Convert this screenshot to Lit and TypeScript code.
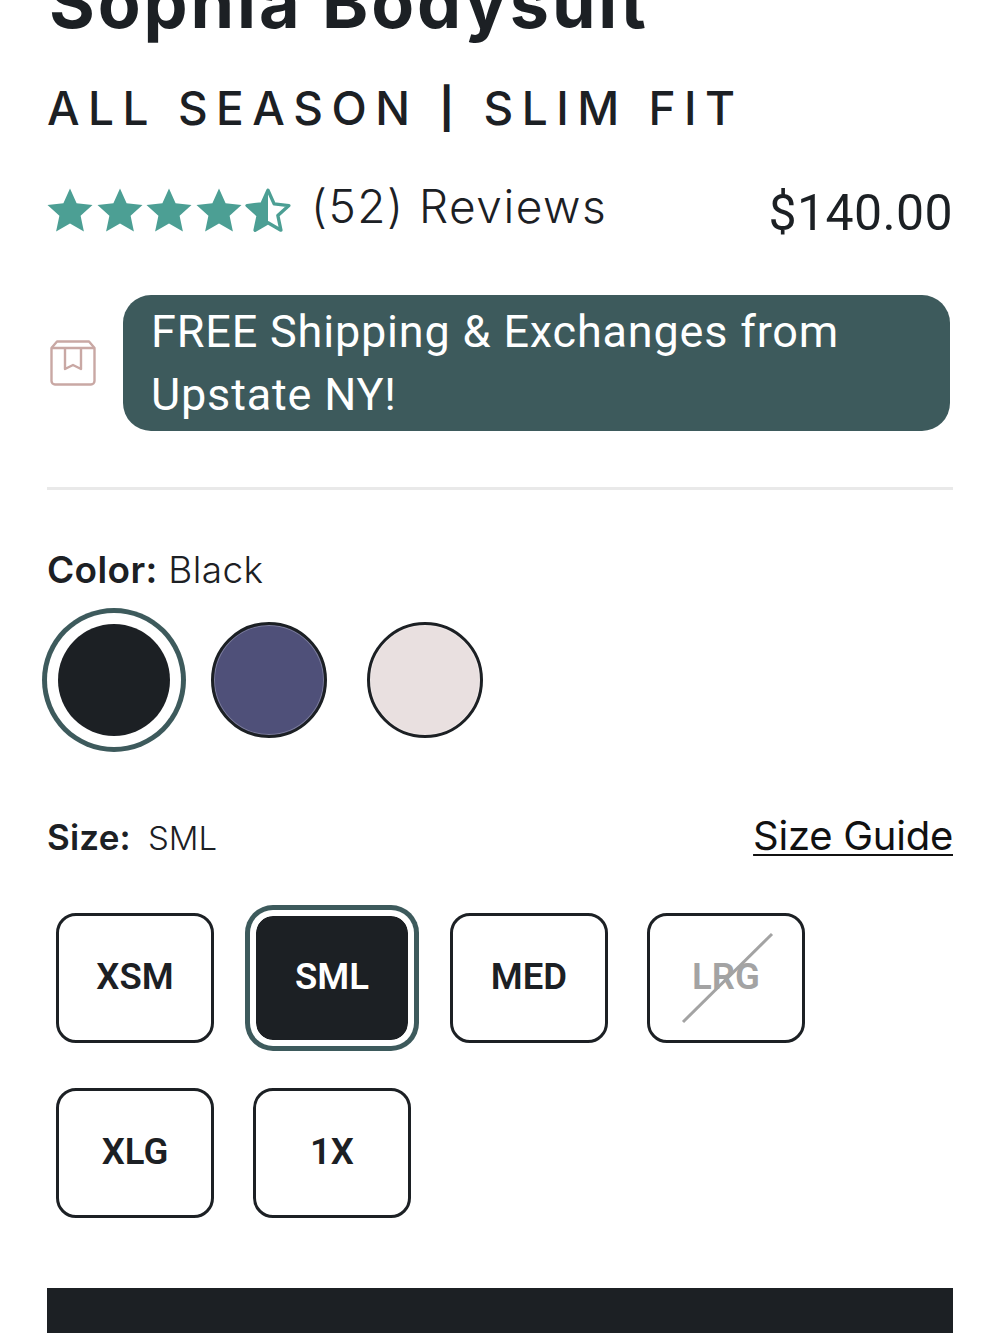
import { css, html, LitElement, svg } from "lit";
import { customElement } from "lit/decorators.js";

const STAR = "M23 1.5l6.6 14.7 15.9 1.8-11.9 10.7 3.3 15.8L23 36.5 9.1 44.5l3.3-15.8L.5 18l15.9-1.8z";

const colors = [
  { name: "Black", hex: "#1c2024", selected: true },
  { name: "Navy", hex: "#4f5079", selected: false },
  { name: "Blush", hex: "#e9e0e0", selected: false },
];

const sizes = [
  { label: "XSM" },
  { label: "SML", selected: true },
  { label: "MED" },
  { label: "LRG", soldOut: true },
  { label: "XLG" },
  { label: "1X" },
];

@customElement("app-root")
export class AppRoot extends LitElement {
  renderStar(half = false) {
    return html`
      <svg class="star" viewBox="0 0 46 46">
        ${half
          ? svg`
              <path d=${STAR} fill="none" stroke="#4c9f94" stroke-width="3.6" stroke-linejoin="round" transform="translate(1.6 1.8) scale(.93)"></path>
              <path d="M23 1.5v35L9.1 44.5l3.3-15.8L.5 18l15.9-1.8z" fill="#4c9f94"></path>
            `
          : svg`<path d=${STAR} fill="#4c9f94"></path>`}
      </svg>
    `;
  }

  render() {
    return html`
      <div class="page">
        <h1 class="title">Sophia Bodysuit</h1>
        <div class="subtitle">ALL SEASON <span class="pipe">|</span> SLIM FIT</div>

        <div class="rating-row">
          <div class="stars">
            ${[0, 1, 2, 3].map(() => this.renderStar())}${this.renderStar(true)}
          </div>
          <span class="reviews">(52) Reviews</span>
          <span class="price">$140.00</span>
        </div>

        <div class="shipping">
          <svg class="box" viewBox="0 0 46 46" fill="none" stroke="#c9a8a4" stroke-width="2.4" stroke-linejoin="round">
            <path d="M7 1.5h32l5.5 6.5v33a3.5 3.5 0 0 1-3.5 3.5H5a3.5 3.5 0 0 1-3.5-3.5V8z"></path>
            <path d="M1.5 8h43M15 8v21l8-4 8 4V8"></path>
          </svg>
          <div class="pill">FREE Shipping &amp; Exchanges from Upstate NY!</div>
        </div>

        <hr class="divider" />

        <div class="color-label"><b>Color:</b> Black</div>
        <div class="swatches">
          ${colors.map(
            (c) => html`
              <div class="swatch-slot">
                <div
                  class=${c.selected ? "swatch selected" : "swatch"}
                  style="background-color: ${c.hex}"
                ></div>
              </div>
            `
          )}
        </div>

        <div class="size-head">
          <div class="size-label"><b>Size:</b><span>SML</span></div>
          <a class="guide">Size Guide</a>
        </div>

        <div class="sizes">
          ${sizes.map(
            (s) => html`
              <div class="size ${s.selected ? "selected" : ""} ${s.soldOut ? "sold-out" : ""}">
                ${s.label}
                ${s.soldOut
                  ? html`<svg class="slash" viewBox="0 0 158 130">
                      <line x1="36" y1="109" x2="125" y2="21" stroke="#a3a3a3" stroke-width="3"></line>
                    </svg>`
                  : ""}
              </div>
            `
          )}
        </div>

        <div class="cta"></div>
      </div>
    `;
  }

  static styles = css`
    :host {
      display: block;
      height: 1333px;
      overflow: hidden;
      background: #fff;
      color: #1c2024;
      font-family: Inter, "Liberation Sans", sans-serif;
    }
    .page {
      display: flex;
      flex-direction: column;
      padding: 0 47px;
    }
    .title {
      margin: -33px 0 0 2px;
      font-size: 70px;
      line-height: 72px;
      font-weight: 700;
      letter-spacing: 2.9px;
      white-space: nowrap;
    }
    .subtitle {
      margin-top: 41px;
      font-size: 46px;
      line-height: 56px;
      font-weight: 500;
      letter-spacing: 8.5px;
      white-space: nowrap;
    }
    .pipe {
      font-size: 40px;
      font-weight: 700;
      vertical-align: 2px;
    }
    .rating-row {
      display: flex;
      align-items: center;
      margin-top: 37px;
      height: 71px;
    }
    .stars {
      display: flex;
      gap: 3.5px;
    }
    .star {
      width: 46px;
      height: 46px;
    }
    .reviews {
      margin-left: 20px;
      font-size: 46px;
      font-weight: 300;
      letter-spacing: 1.5px;
      margin-top: -8px;
    }
    .price {
      margin-left: auto;
      font-family: Roboto, sans-serif;
      font-size: 50px;
      letter-spacing: 0.4px;
      margin-top: 6px;
    }
    .shipping {
      display: flex;
      align-items: center;
      gap: 27px;
      margin-top: 50px;
      padding: 0 3px;
    }
    .box {
      flex: none;
      width: 46px;
      height: 46px;
    }
    .pill {
      flex: 1;
      box-sizing: border-box;
      height: 136px;
      padding: 5px 28px;
      border-radius: 28px;
      background: #3d5a5c;
      color: #fff;
      font-family: Roboto, sans-serif;
      font-size: 45px;
      line-height: 63px;
      letter-spacing: 0.82px;
    }
    .divider {
      align-self: stretch;
      height: 3px;
      margin: 56px 0 0;
      border: 0;
      background: #e9e9e9;
    }
    .color-label {
      margin-top: 57px;
      font-size: 37px;
      line-height: 46px;
      font-weight: 300;
      letter-spacing: 0.35px;
    }
    .color-label b,
    .size-label b {
      font-weight: 600;
    }
    .swatches {
      display: flex;
      margin-top: 15px;
      margin-left: -5.5px;
    }
    .swatch-slot {
      display: flex;
      align-items: center;
      justify-content: center;
      width: 155.5px;
      height: 144px;
    }
    .swatch-slot:first-child {
      width: 144px;
      margin-right: 6px;
    }
    .swatch {
      box-sizing: border-box;
      width: 116px;
      height: 116px;
      border-radius: 50%;
      border: 3px solid #1c2024;
      box-shadow: inset 0 0 0 1px rgba(255, 255, 255, 0.25);
    }
    .swatch.selected {
      width: 112px;
      height: 112px;
      border: 0;
      box-shadow: 0 0 0 11px #fff, 0 0 0 16px #3d5a5c;
    }
    .size-head {
      display: flex;
      align-items: center;
      justify-content: space-between;
      margin-top: 59px;
      height: 52px;
    }
    .size-label {
      display: flex;
      align-items: baseline;
      gap: 17px;
      font-size: 35px;
      font-weight: 300;
    }
    .size-label b {
      letter-spacing: 0.2px;
    }
    .size-label span {
      font-size: 33px;
    }
    .guide {
      margin-top: -3px;
      font-size: 40px;
      font-weight: 400;
      letter-spacing: -0.25px;
      color: #111;
      text-decoration: underline;
      text-decoration-thickness: 2px;
      text-underline-offset: 4px;
    }
    .sizes {
      display: grid;
      grid-template-columns: repeat(4, 158px);
      column-gap: 39px;
      row-gap: 45px;
      margin-top: 50px;
      padding-left: 9px;
    }
    .size {
      position: relative;
      box-sizing: border-box;
      display: flex;
      align-items: center;
      justify-content: center;
      height: 130px;
      padding-bottom: 3px;
      border: 3px solid #1c2024;
      border-radius: 20px;
      font-family: Roboto, sans-serif;
      font-size: 36.5px;
      font-weight: 600;
    }
    .size.selected {
      border-color: #fff;
      background: #1c2024;
      background-clip: padding-box;
      color: #fff;
      box-shadow: 0 0 0 3px #fff, 0 0 0 8px #3d5a5c;
    }
    .size.sold-out {
      color: #a3a3a3;
    }
    .slash {
      position: absolute;
      inset: -3px;
      width: 158px;
      height: 130px;
    }
    .cta {
      align-self: stretch;
      height: 60px;
      margin-top: 70px;
      background: #1c2024;
    }
  `;
}
